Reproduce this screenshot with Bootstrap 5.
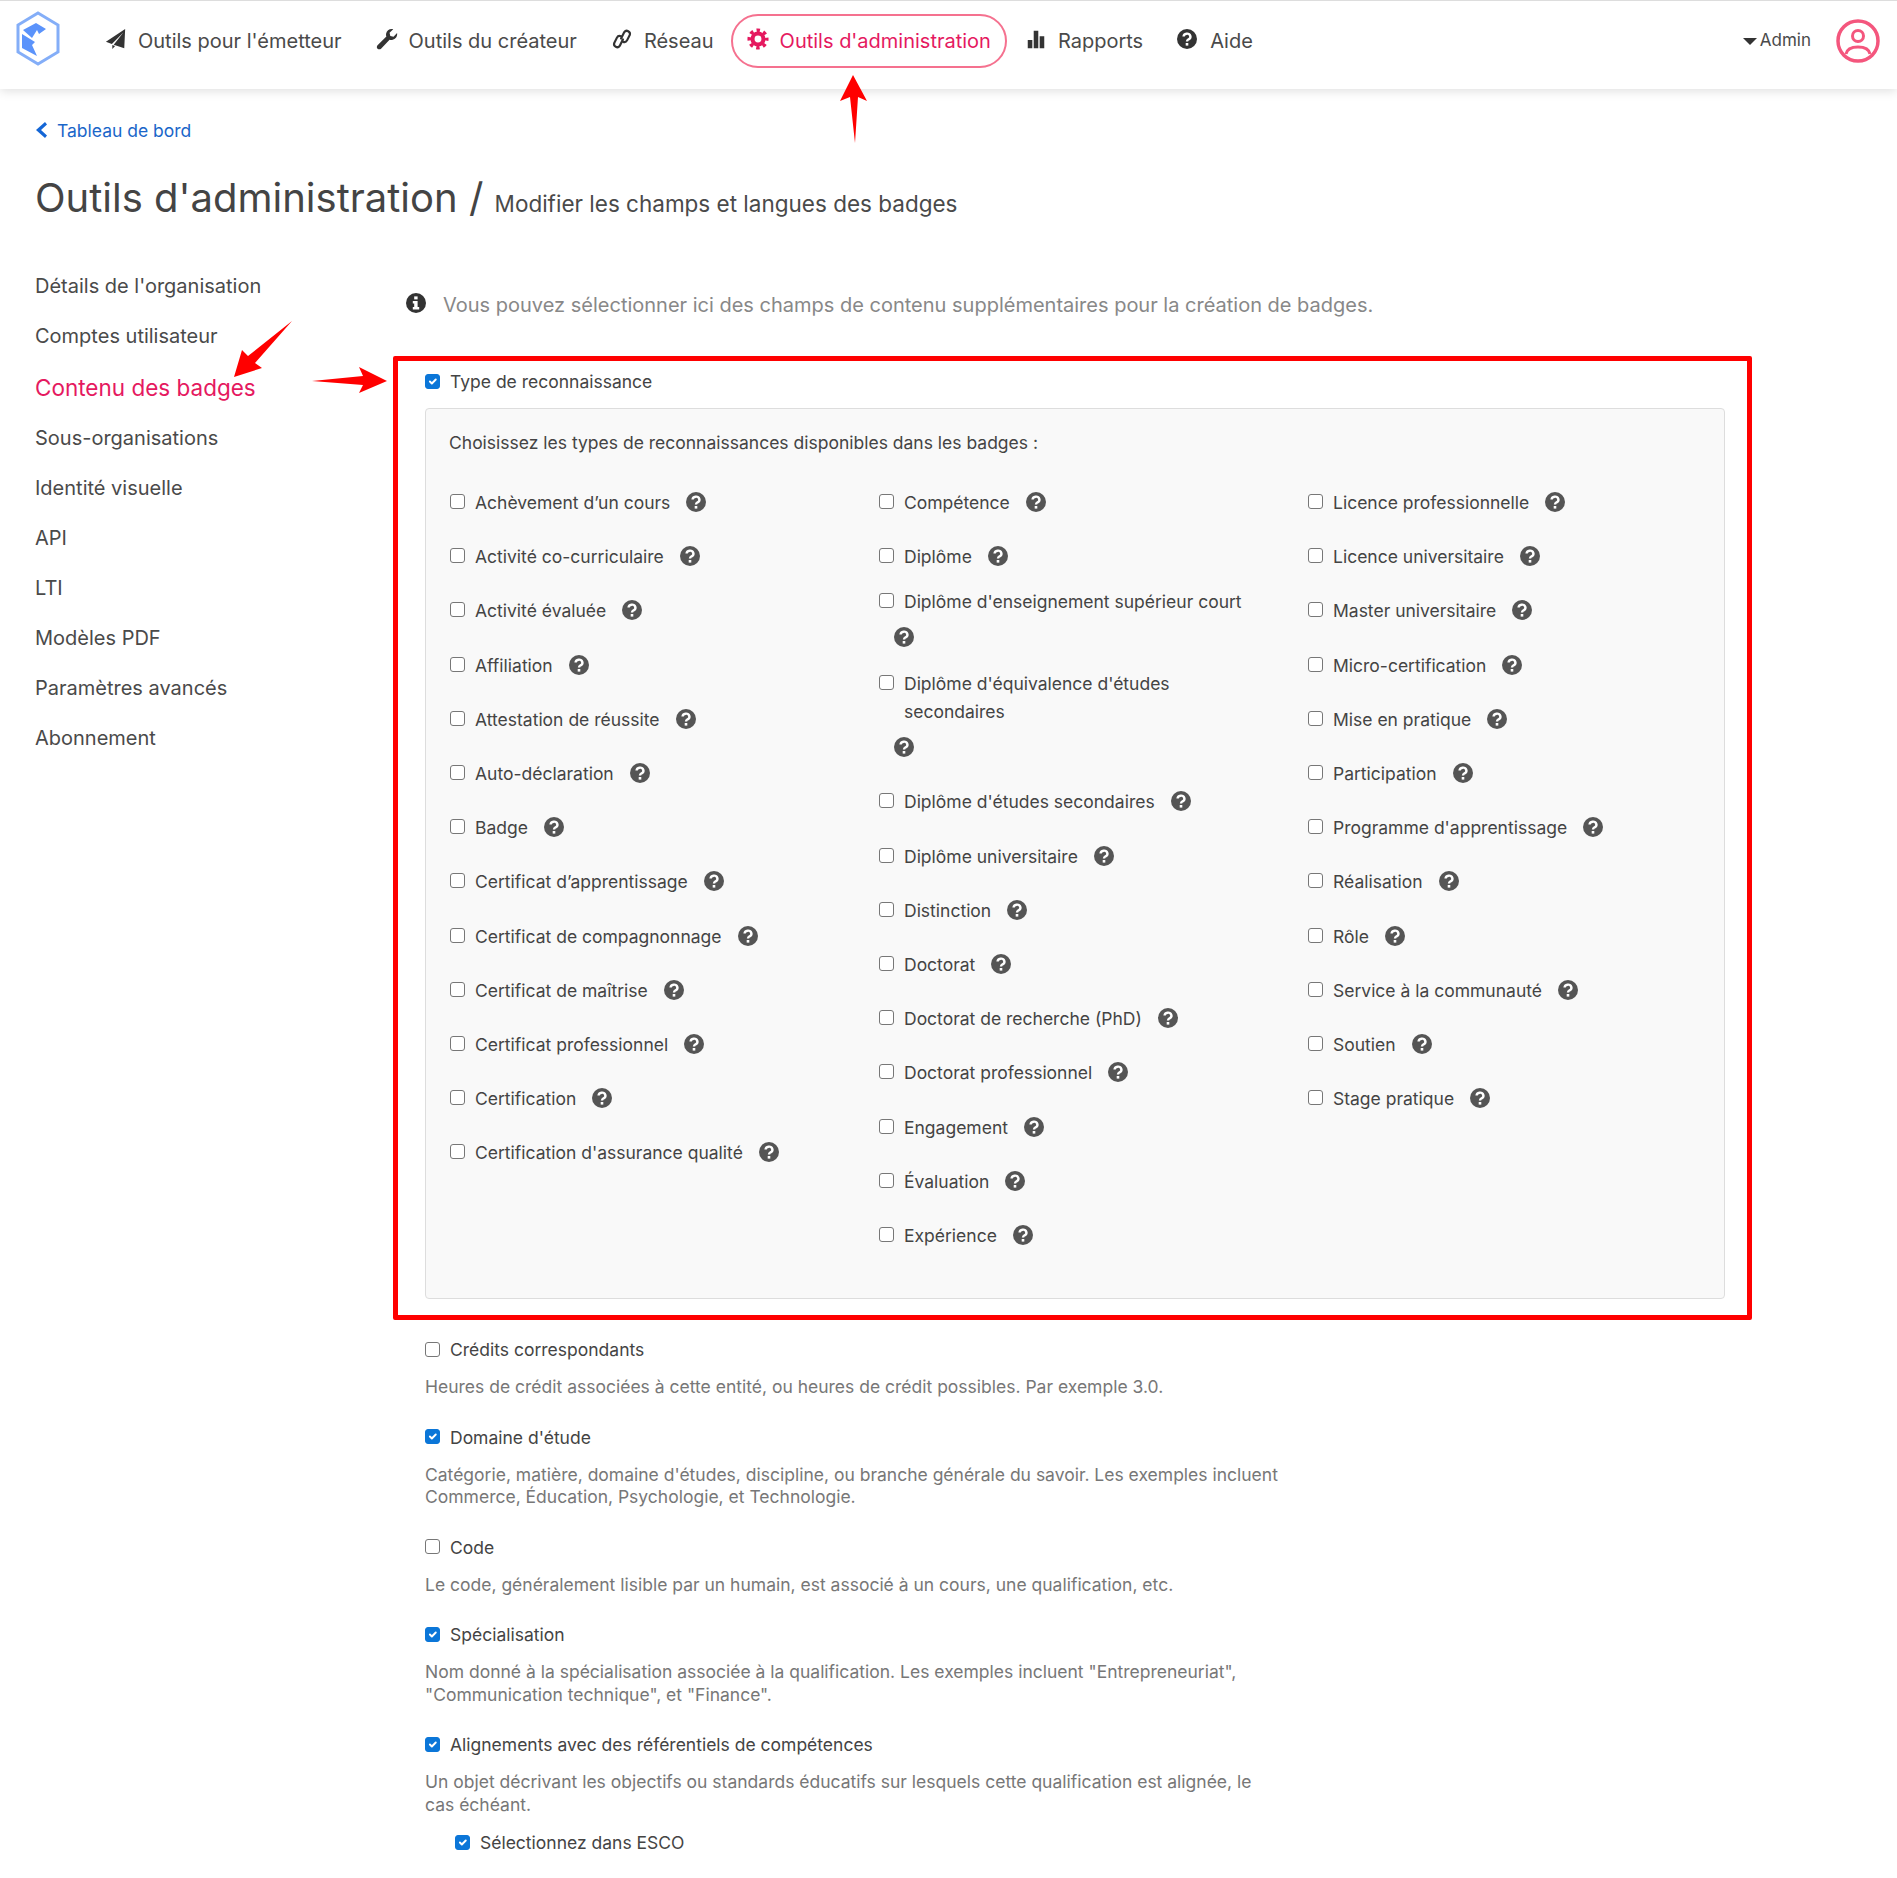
<!DOCTYPE html>
<html lang="fr">
<head>
    <meta charset="UTF-8">
    <meta name="viewport" content="width=device-width, initial-scale=1.0">
    <title>Outils d'administration</title>
    <link href="https://cdn.jsdelivr.net/npm/bootstrap@5.3.0/dist/css/bootstrap.min.css" rel="stylesheet">
    <style>
        body { font-family: Inter, "Liberation Sans", sans-serif; color: #444; height: 1878px; overflow: hidden; position: relative; }
        .top-bar { height: 89px; border-top: 1px solid #ddd; background: #fff; box-shadow: 0 2px 10px rgba(0,0,0,.13); padding: 0 17px 8px 16px; }
        .brand-logo { width: 44px; height: 56px; margin-right: 29px; margin-top: -5px; }
        .top-bar .nav-link { height: 54px; display: flex; align-items: center; gap: 11px; padding: 0 14px; border: 2px solid transparent; border-radius: 27px; color: #4a4a4a; font-size: 20px; margin-right: 2px; }
        .top-bar .nav-link svg { width: 22px; height: 22px; color: #333; margin-top: -4px; }
        .top-bar .nav-link svg.nav-help { width: 20px; height: 20px; margin-right: 2px; }
        .top-bar .nav-link.current { color: #e5195f; border-color: #f5718f; margin-left: -1px; }
        .top-bar .nav-link.current svg { color: #e5195f; }
        .admin-menu { font-size: 17px; color: #4a4a4a; gap: 3px; }
        .caret-down { border-left: 7px solid transparent; border-right: 7px solid transparent; border-top: 7px solid #333; }
        .avatar { width: 44px; height: 44px; color: #f4567d; margin-left: 25px; }
        .page-wrap { padding-left: 35px; }
        .back-link { margin: 28px 0 0 -2px; line-height: 28px; font-size: 17.500px; color: #1a66c9; text-decoration: none; gap: 9px; }
        .back-link svg { width: 15px; height: 18px; margin-top: -3px; }
        .page-title { margin: 29px 0 0; font-size: 40px; line-height: 48px; font-weight: 400; color: #444; }
        .page-title small { font-size: 22.500px; color: #4a4a4a; }
        .side-col { width: 358px; flex: none; padding-top: 43px; }
        .side-col .nav-link { padding: 0; line-height: 30px; margin-bottom: 20.100px; font-size: 20px; color: #4a4a4a; }
        .side-col .nav-link.current { color: #e5195f; font-size: 22.500px; margin-top: 1.500px; margin-bottom: 20px; }
        .main-col { padding-top: 62px; width: 1359px; flex: none; }
        .intro { margin: 0 0 36px 13px; line-height: 30px; font-size: 20px; color: #888; gap: 17px; }
        .intro svg { width: 20px; height: 20px; color: #333; margin-top: -5px; }
        .red-frame { border: 5px solid #f00; border-radius: 2px; padding: 7px 22px 16px 27px; height: 964px; }
        .tick.form-check-input { width: 15px; height: 15px; margin: 0; flex: none; border: 1.500px solid #777; border-radius: 3px; background-color: #fff; box-shadow: none; }
        .tick.form-check-input:checked { background-color: #0b76d8; border-color: #0b76d8; }
        .tick-line { line-height: 28px; font-size: 17.500px; color: #444; gap: 10px; }
        .tick-line .tick.form-check-input { margin-top: -2px; }
        .reco-panel { margin-top: 12px; height: 891px; background: #f9f9f9; border: 1px solid #ddd; border-radius: 4px; padding: 20px 11px 0 24px; }
        .reco-panel p { margin: 0 0 19px -1px; line-height: 28px; font-size: 17.500px; }
        .opt-item { display: flex; align-items: flex-start; gap: 10px; padding: 13px 24px 13.200px 0; font-size: 17.500px; line-height: 28px; }
        .opt-item .tick.form-check-input { margin-top: 5px; }
        .opt-item.wrapped { padding-top: 4px; padding-bottom: 0; }
        .hint { width: 20px; height: 20px; color: #555; margin-left: 16px; vertical-align: -3px; }
        .wrapped .hint { display: block; margin: 11px 0 18.500px -10px; }
        .other-fields { margin-left: 32px; width: 857px; padding-top: 16px; }
        .other-fields .tick-line + p { margin: 12px 0 25px; line-height: 22.500px; font-size: 17.500px; color: #777; }
        .tick-line.sub-choice { margin: -12px 0 0 30px; }
        .arrows { position: absolute; left: 0; top: 0; pointer-events: none; }
    </style>
</head>
<body>

    <svg width="0" height="0" class="position-absolute">
        <symbol id="i-help" viewBox="0 0 20 20">
            <circle cx="10" cy="10" r="10" fill="currentColor"/>
            <path d="M6.600 7.600a3.400 3 0 1 1 5 2.700c-1 .6-1.600 1-1.600 2.200" fill="none" stroke="#fff" stroke-width="2.400"/>
            <rect x="8.700" y="14" width="2.600" height="2.600" fill="#fff"/>
        </symbol>
        <symbol id="i-info" viewBox="0 0 20 20">
            <circle cx="10" cy="10" r="10" fill="currentColor"/>
            <rect x="8.200" y="3.400" width="3.400" height="3" fill="#fff"/>
            <path d="M6.800 8h4.800v6h1.600v2.400H6.800V14h1.400v-3.600H6.800z" fill="#fff"/>
        </symbol>
    </svg>

    <nav class="top-bar d-flex align-items-center">
        <svg class="brand-logo" viewBox="0 0 44 56">
            <path d="M22 2 42 14v27L22 53 2 41V14z" fill="#fff" stroke="#84aef8" stroke-width="3"/>
            <path d="M7 19 20 12l10 6-7 5-2-4-5 8z" fill="#5b93fb"/>
            <path d="M6 23l13 8-3 3 5 11-15-8z" fill="#5b93fb"/>
        </svg>
        <ul class="nav">
            <li class="nav-item"><a class="nav-link" href="#">
                <svg viewBox="0 0 24 24"><path d="M22 1 1 15l6.500 2.500L20 5 9.500 18.300 21 22z" fill="currentColor"/><path d="M8 18.500v4.500l3-3.300z" fill="currentColor"/></svg>
                Outils pour l'émetteur</a></li>
            <li class="nav-item"><a class="nav-link" href="#">
                <svg viewBox="0 0 24 24"><path d="M23 5.500c.6 3.500-1.500 7-5.500 7.500-1 .1-2 0-2.700-.3L5.500 22.500c-1 1-2.700 1-3.800 0-1.100-1.100-1-2.800 0-3.800l9.600-9.500c-.4-1-.5-2-.3-3C11.700 2.500 15 .5 18.800 1.300l-4 4 .8 3.500 3.500.8z" fill="currentColor"/></svg>
                Outils du créateur</a></li>
            <li class="nav-item"><a class="nav-link" href="#">
                <svg viewBox="0 0 24 24"><g fill="none" stroke="currentColor" stroke-width="2.400" stroke-linecap="round"><path d="M11 11.500l3.500-7a3.400 3.400 0 0 1 6 3l-3 6a3.400 3.400 0 0 1-4.500 1.500"/><path d="M13 12.500l-3.500 7a3.400 3.400 0 0 1-6-3l3-6a3.400 3.400 0 0 1 4.500-1.500"/></g></svg>
                Réseau</a></li>
            <li class="nav-item"><a class="nav-link current" href="#">
                <svg viewBox="0 0 24 24"><circle cx="12" cy="12" r="6" fill="none" stroke="currentColor" stroke-width="4.500"/><circle cx="12" cy="12" r="9.500" fill="none" stroke="currentColor" stroke-width="4" stroke-dasharray="3.700 3.760" stroke-dashoffset="1.850"/></svg>
                Outils d'administration</a></li>
            <li class="nav-item"><a class="nav-link" href="#">
                <svg viewBox="0 0 24 24"><path d="M3 13h5v9H3zM9.500 3h5v19h-5zM16 9h5v13h-5z" fill="currentColor"/></svg>
                Rapports</a></li>
            <li class="nav-item"><a class="nav-link" href="#">
                <svg class="nav-help"><use href="#i-help"/></svg>
                Aide</a></li>
        </ul>
        <div class="ms-auto d-flex align-items-center">
            <div class="admin-menu d-flex align-items-center"><span class="caret-down"></span>Admin</div>
            <svg class="avatar" viewBox="0 0 44 44" fill="none" stroke="currentColor" stroke-width="3.500">
                <circle cx="22" cy="22" r="20"/>
                <circle cx="22" cy="17" r="5.500" stroke-width="3"/>
                <path d="M10 35c1-5 6-7 12-7s11 2 12 7" stroke-width="3"/>
            </svg>
        </div>
    </nav>

    <div class="page-wrap">
        <a class="back-link d-inline-flex align-items-center" href="#">
            <svg viewBox="0 0 15 18"><path d="M12 1 3 9l9 8 2-2.500L8 9l6-5.500z" fill="#1466d6"/></svg>
            Tableau de bord</a>
        <h1 class="page-title">Outils d'administration / <small>Modifier les champs et langues des badges</small></h1>

        <div class="d-flex">
            <div class="side-col">
                <ul class="nav flex-column">
                    <li class="nav-item"><a class="nav-link" href="#">Détails de l'organisation</a></li>
                    <li class="nav-item"><a class="nav-link" href="#">Comptes utilisateur</a></li>
                    <li class="nav-item"><a class="nav-link current" href="#">Contenu des badges</a></li>
                    <li class="nav-item"><a class="nav-link" href="#">Sous-organisations</a></li>
                    <li class="nav-item"><a class="nav-link" href="#">Identité visuelle</a></li>
                    <li class="nav-item"><a class="nav-link" href="#">API</a></li>
                    <li class="nav-item"><a class="nav-link" href="#">LTI</a></li>
                    <li class="nav-item"><a class="nav-link" href="#">Modèles PDF</a></li>
                    <li class="nav-item"><a class="nav-link" href="#">Paramètres avancés</a></li>
                    <li class="nav-item"><a class="nav-link" href="#">Abonnement</a></li>
                </ul>
            </div>

            <div class="main-col">
                <div class="intro d-flex align-items-center">
                    <svg><use href="#i-info"/></svg>
                    Vous pouvez sélectionner ici des champs de contenu supplémentaires pour la création de badges.
                </div>

                <div class="red-frame">
                    <div class="tick-line d-flex align-items-center"><input class="form-check-input tick" type="checkbox" checked>Type de reconnaissance</div>
                    <div class="reco-panel">
                        <p>Choisissez les types de reconnaissances disponibles dans les badges :</p>
                        <div class="row">
                            <div class="col-4">
                                <div class="opt-item"><input class="form-check-input tick" type="checkbox"><div>Achèvement d’un cours<svg class="hint"><use href="#i-help"/></svg></div></div>
                                <div class="opt-item"><input class="form-check-input tick" type="checkbox"><div>Activité co-curriculaire<svg class="hint"><use href="#i-help"/></svg></div></div>
                                <div class="opt-item"><input class="form-check-input tick" type="checkbox"><div>Activité évaluée<svg class="hint"><use href="#i-help"/></svg></div></div>
                                <div class="opt-item"><input class="form-check-input tick" type="checkbox"><div>Affiliation<svg class="hint"><use href="#i-help"/></svg></div></div>
                                <div class="opt-item"><input class="form-check-input tick" type="checkbox"><div>Attestation de réussite<svg class="hint"><use href="#i-help"/></svg></div></div>
                                <div class="opt-item"><input class="form-check-input tick" type="checkbox"><div>Auto-déclaration<svg class="hint"><use href="#i-help"/></svg></div></div>
                                <div class="opt-item"><input class="form-check-input tick" type="checkbox"><div>Badge<svg class="hint"><use href="#i-help"/></svg></div></div>
                                <div class="opt-item"><input class="form-check-input tick" type="checkbox"><div>Certificat d’apprentissage<svg class="hint"><use href="#i-help"/></svg></div></div>
                                <div class="opt-item"><input class="form-check-input tick" type="checkbox"><div>Certificat de compagnonnage<svg class="hint"><use href="#i-help"/></svg></div></div>
                                <div class="opt-item"><input class="form-check-input tick" type="checkbox"><div>Certificat de maîtrise<svg class="hint"><use href="#i-help"/></svg></div></div>
                                <div class="opt-item"><input class="form-check-input tick" type="checkbox"><div>Certificat professionnel<svg class="hint"><use href="#i-help"/></svg></div></div>
                                <div class="opt-item"><input class="form-check-input tick" type="checkbox"><div>Certification<svg class="hint"><use href="#i-help"/></svg></div></div>
                                <div class="opt-item"><input class="form-check-input tick" type="checkbox"><div>Certification d'assurance qualité<svg class="hint"><use href="#i-help"/></svg></div></div>
                            </div>
                            <div class="col-4">
                                <div class="opt-item"><input class="form-check-input tick" type="checkbox"><div>Compétence<svg class="hint"><use href="#i-help"/></svg></div></div>
                                <div class="opt-item"><input class="form-check-input tick" type="checkbox"><div>Diplôme<svg class="hint"><use href="#i-help"/></svg></div></div>
                                <div class="opt-item wrapped"><input class="form-check-input tick" type="checkbox"><div>Diplôme d'enseignement supérieur court<svg class="hint"><use href="#i-help"/></svg></div></div>
                                <div class="opt-item wrapped"><input class="form-check-input tick" type="checkbox"><div>Diplôme d'équivalence d'études<br>secondaires<svg class="hint"><use href="#i-help"/></svg></div></div>
                                <div class="opt-item"><input class="form-check-input tick" type="checkbox"><div>Diplôme d'études secondaires<svg class="hint"><use href="#i-help"/></svg></div></div>
                                <div class="opt-item"><input class="form-check-input tick" type="checkbox"><div>Diplôme universitaire<svg class="hint"><use href="#i-help"/></svg></div></div>
                                <div class="opt-item"><input class="form-check-input tick" type="checkbox"><div>Distinction<svg class="hint"><use href="#i-help"/></svg></div></div>
                                <div class="opt-item"><input class="form-check-input tick" type="checkbox"><div>Doctorat<svg class="hint"><use href="#i-help"/></svg></div></div>
                                <div class="opt-item"><input class="form-check-input tick" type="checkbox"><div>Doctorat de recherche (PhD)<svg class="hint"><use href="#i-help"/></svg></div></div>
                                <div class="opt-item"><input class="form-check-input tick" type="checkbox"><div>Doctorat professionnel<svg class="hint"><use href="#i-help"/></svg></div></div>
                                <div class="opt-item"><input class="form-check-input tick" type="checkbox"><div>Engagement<svg class="hint"><use href="#i-help"/></svg></div></div>
                                <div class="opt-item"><input class="form-check-input tick" type="checkbox"><div>Évaluation<svg class="hint"><use href="#i-help"/></svg></div></div>
                                <div class="opt-item"><input class="form-check-input tick" type="checkbox"><div>Expérience<svg class="hint"><use href="#i-help"/></svg></div></div>
                            </div>
                            <div class="col-4">
                                <div class="opt-item"><input class="form-check-input tick" type="checkbox"><div>Licence professionnelle<svg class="hint"><use href="#i-help"/></svg></div></div>
                                <div class="opt-item"><input class="form-check-input tick" type="checkbox"><div>Licence universitaire<svg class="hint"><use href="#i-help"/></svg></div></div>
                                <div class="opt-item"><input class="form-check-input tick" type="checkbox"><div>Master universitaire<svg class="hint"><use href="#i-help"/></svg></div></div>
                                <div class="opt-item"><input class="form-check-input tick" type="checkbox"><div>Micro-certification<svg class="hint"><use href="#i-help"/></svg></div></div>
                                <div class="opt-item"><input class="form-check-input tick" type="checkbox"><div>Mise en pratique<svg class="hint"><use href="#i-help"/></svg></div></div>
                                <div class="opt-item"><input class="form-check-input tick" type="checkbox"><div>Participation<svg class="hint"><use href="#i-help"/></svg></div></div>
                                <div class="opt-item"><input class="form-check-input tick" type="checkbox"><div>Programme d'apprentissage<svg class="hint"><use href="#i-help"/></svg></div></div>
                                <div class="opt-item"><input class="form-check-input tick" type="checkbox"><div>Réalisation<svg class="hint"><use href="#i-help"/></svg></div></div>
                                <div class="opt-item"><input class="form-check-input tick" type="checkbox"><div>Rôle<svg class="hint"><use href="#i-help"/></svg></div></div>
                                <div class="opt-item"><input class="form-check-input tick" type="checkbox"><div>Service à la communauté<svg class="hint"><use href="#i-help"/></svg></div></div>
                                <div class="opt-item"><input class="form-check-input tick" type="checkbox"><div>Soutien<svg class="hint"><use href="#i-help"/></svg></div></div>
                                <div class="opt-item"><input class="form-check-input tick" type="checkbox"><div>Stage pratique<svg class="hint"><use href="#i-help"/></svg></div></div>
                            </div>
                        </div>
                    </div>
                </div>

                <div class="other-fields">
                    <div class="tick-line d-flex align-items-center"><input class="form-check-input tick" type="checkbox">Crédits correspondants</div>
                    <p>Heures de crédit associées à cette entité, ou heures de crédit possibles. Par exemple 3.0.</p>
                    <div class="tick-line d-flex align-items-center"><input class="form-check-input tick" type="checkbox" checked>Domaine d'étude</div>
                    <p>Catégorie, matière, domaine d'études, discipline, ou branche générale du savoir. Les exemples incluent Commerce, Éducation, Psychologie, et Technologie.</p>
                    <div class="tick-line d-flex align-items-center"><input class="form-check-input tick" type="checkbox">Code</div>
                    <p>Le code, généralement lisible par un humain, est associé à un cours, une qualification, etc.</p>
                    <div class="tick-line d-flex align-items-center"><input class="form-check-input tick" type="checkbox" checked>Spécialisation</div>
                    <p>Nom donné à la spécialisation associée à la qualification. Les exemples incluent "Entrepreneuriat", "Communication technique", et "Finance".</p>
                    <div class="tick-line d-flex align-items-center"><input class="form-check-input tick" type="checkbox" checked>Alignements avec des référentiels de compétences</div>
                    <p>Un objet décrivant les objectifs ou standards éducatifs sur lesquels cette qualification est alignée, le cas échéant.</p>
                    <div class="tick-line sub-choice d-flex align-items-center"><input class="form-check-input tick" type="checkbox" checked>Sélectionnez dans ESCO</div>
                </div>
            </div>
        </div>
    </div>

    <!-- annotation arrows drawn over the screenshot -->
    <svg class="arrows" width="1897" height="1878" fill="#f00">
        <polygon points="853,75 867,101 858,97 855,143 850,97 840,101"/>
        <polygon points="292,321 255,363 262,368 234,377 242,350 248,356"/>
        <polygon points="312,381 363,376 359,367 387,381 359,393 363,385"/>
    </svg>

    <script src="https://cdn.jsdelivr.net/npm/bootstrap@5.3.0/dist/js/bootstrap.bundle.min.js"></script>
</body>
</html>
